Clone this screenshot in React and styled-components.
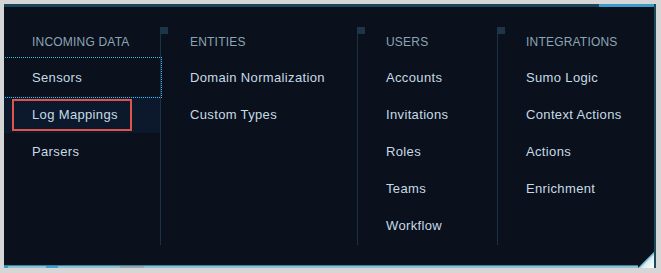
import React from "react";
import styled, { createGlobalStyle } from "styled-components";

const GlobalStyle = createGlobalStyle`
  html, body {
    margin: 0;
    padding: 0;
    background: #d6d6d6;
  }
  body {
    padding: 4px;
    font-family: "Liberation Sans", Arial, sans-serif;
  }
`;

const Panel = styled.div`
  position: relative;
  width: 652px;
  height: 264px;
  box-sizing: border-box;
  border-right: 2px solid #1c4a5a;
  padding: 23px 0 0;
  display: flex;
  overflow: hidden;
  background:
    linear-gradient(
        to right,
        #1b4658 0,
        #1b4658 calc(100% - 55px),
        #3a9ccb calc(100% - 55px)
      )
      top / 100% 3px no-repeat,
    linear-gradient(
        to right,
        #3a9ccb 0 4px,
        #8cc3d4 4px 42px,
        #3ba4d4 42px 54px,
        #8cc3d4 54px 116px,
        #93a9b0 116px 140px,
        #8cc3d4 140px
      )
      bottom / 100% 2px no-repeat,
    linear-gradient(#3f7f96, #3f7f96) bottom 2px left 0 / 100% 1px no-repeat,
    #0a101c;

  &::after {
    content: "";
    position: absolute;
    right: 0;
    bottom: 0;
    width: 16px;
    height: 16px;
    background: linear-gradient(
      to top left,
      #ffffff 0%,
      #d8edf3 40%,
      #6aaabf 49%,
      #0a101c 53%,
      #0a101c 100%
    );
  }
`;

const Column = styled.div`
  position: relative;
  width: ${(p) => p.width}px;
  height: 218px;
  flex-shrink: 0;
  box-sizing: border-box;
  border-left: ${(p) => (p.divider ? "1px solid #1b3144" : "none")};

  &::before {
    content: ${(p) => (p.divider ? '""' : "none")};
    position: absolute;
    left: -1px;
    top: 0;
    width: 8px;
    height: 7px;
    background: #1d3548;
  }
`;

const Header = styled.div`
  margin-top: 7px;
  padding-left: ${(p) => p.indent}px;
  height: 17px;
  line-height: 17px;
  font-size: 12px;
  letter-spacing: 0.2px;
  color: #8aa5b6;
  text-transform: uppercase;
`;

const List = styled.ul`
  list-style: none;
  margin: 8px 0 0;
  padding: 0;
`;

const Item = styled.li`
  height: 37px;
  display: flex;
  align-items: center;
  font-size: 13px;
  letter-spacing: 0.35px;
  color: #c6dbe5;
  background: ${(p) => (p.highlight ? "#0c192d" : "transparent")};
  outline: ${(p) => (p.active ? "1px dotted #3bbdf2" : "none")};
  outline-offset: 1px;
  margin-left: ${(p) => (p.active ? "-10px" : "0")};
  padding-left: ${(p) => (p.active ? p.indent + 10 : p.indent)}px;
`;

const Marked = styled.span`
  display: flex;
  align-items: center;
  height: 32px;
  box-sizing: border-box;
  margin-left: -20px;
  padding: 0 12px 0 18px;
  border: 2px solid #e0534b;
`;

const columns = [
  {
    title: "Incoming Data",
    width: 156,
    indent: 28,
    items: ["Sensors", "Log Mappings", "Parsers"],
  },
  {
    title: "Entities",
    width: 197,
    indent: 29,
    divider: true,
    items: ["Domain Normalization", "Custom Types"],
  },
  {
    title: "Users",
    width: 140,
    indent: 28,
    divider: true,
    items: ["Accounts", "Invitations", "Roles", "Teams", "Workflow"],
  },
  {
    title: "Integrations",
    width: 157,
    indent: 28,
    divider: true,
    items: ["Sumo Logic", "Context Actions", "Actions", "Enrichment"],
  },
];

const App = () => {
  return (
    <>
      <GlobalStyle />
      <Panel>
        {columns.map((col) => (
          <Column key={col.title} width={col.width} divider={col.divider}>
            <Header indent={col.indent}>{col.title}</Header>
            <List>
              {col.items.map((item) => (
                <Item
                  key={item}
                  indent={col.indent}
                  active={item === "Sensors"}
                  highlight={item === "Log Mappings"}
                >
                  {item === "Log Mappings" ? <Marked>{item}</Marked> : item}
                </Item>
              ))}
            </List>
          </Column>
        ))}
      </Panel>
    </>
  );
};

export default App;
